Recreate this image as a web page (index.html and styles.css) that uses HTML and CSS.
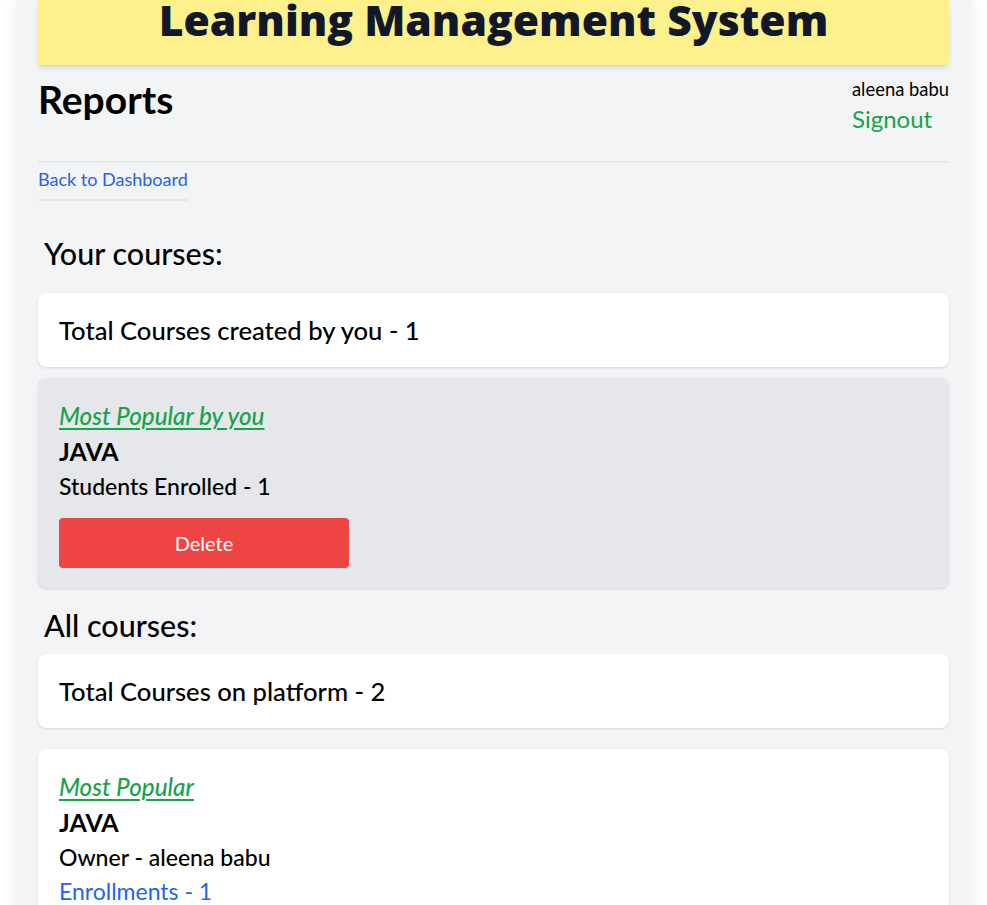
FILE: index.html
```html
<!DOCTYPE html>
<html lang="en">
<head>
<meta charset="utf-8">
<title>Reports</title>
<link rel="stylesheet" href="styles.css">
</head>
<body>
<div class="page">
  <header class="site-header">
    <h1 class="site-title">Learning Management System</h1>
  </header>
  <div class="topbar">
    <h2 class="page-title">Reports</h2>
    <div class="user">
      <div class="user-name">aleena babu</div>
      <a class="signout" href="#">Signout</a>
    </div>
  </div>
  <nav class="crumbs">
    <a class="back-link" href="#">Back to Dashboard</a>
  </nav>

  <h3 class="section-title section-first">Your courses:</h3>
  <div class="card stat-card">Total Courses created by you - 1</div>
  <div class="card popular-card muted">
    <a class="popular-label" href="#">Most Popular by you</a>
    <div class="course-name">JAVA</div>
    <div class="course-meta">Students Enrolled - 1</div>
    <button class="delete-btn">Delete</button>
  </div>

  <h3 class="section-title section-second">All courses:</h3>
  <div class="card stat-card">Total Courses on platform - 2</div>
  <div class="card popular-card all-popular">
    <a class="popular-label" href="#">Most Popular</a>
    <div class="course-name">JAVA</div>
    <div class="course-meta">Owner - aleena babu</div>
    <div class="course-enroll">Enrollments - 1</div>
  </div>
</div>
</body>
</html>
```

FILE: styles.css
```css
* { box-sizing: border-box; }
html, body { margin: 0; padding: 0; }
body {
  background: #ffffff;
  font-family: "Lato", "Noto Sans", sans-serif;
  color: #000;
  overflow: hidden;
}
.page {
  margin: 0 16px;
  min-height: 905px;
  background: #f3f4f6;
  padding: 0 22px 40px;
  box-shadow: 0 0 18px rgba(0,0,0,0.08);
}
.site-header {
  height: 65px;
  background: #fef08a;
  display: flex;
  align-items: flex-end;
  justify-content: center;
  padding-bottom: 22px;
  box-shadow: 0 4px 6px -1px rgba(0,0,0,0.1), 0 2px 4px -2px rgba(0,0,0,0.1);
}
.site-title {
  margin: 0;
  font-family: "Open Sans", "Lato", sans-serif;
  font-size: 42.6px;
  line-height: 48px;
  font-weight: 800;
  color: #111827;
  white-space: nowrap;
}
.topbar {
  display: flex;
  justify-content: space-between;
  align-items: flex-start;
  padding-top: 12px;
  height: 98px;
  border-bottom: 2px solid #e5e7eb;
}
.page-title {
  margin: 0;
  font-size: 39px;
  line-height: 44px;
  font-weight: 700;
}
.user { display: flex; flex-direction: column; align-items: flex-start; padding-top: 1px; }
.user-name { font-size: 18.4px; line-height: 22px; }
.signout {
  color: #16a34a;
  text-decoration: none;
  font-size: 24px;
  line-height: 37px;
}
.crumbs { padding-top: 4px; }
.back-link {
  display: inline-block;
  color: #2563eb;
  text-decoration: none;
  font-size: 18px;
  line-height: 24px;
  padding-bottom: 8px;
  border-bottom: 2px solid #e5e7eb;
}
.section-title {
  margin: 0;
  padding-left: 6px;
  font-size: 30.5px;
  line-height: 40px;
  font-weight: 500;
}
.section-first { margin-top: 32px; margin-bottom: 20px; }
.section-second { margin-top: 17px; margin-bottom: 9px; }
.card {
  background: #fff;
  border-radius: 8px;
  box-shadow: 0 1px 3px 0 rgba(0,0,0,0.1), 0 1px 2px -1px rgba(0,0,0,0.1);
  padding: 0 21px;
}
.stat-card {
  height: 74px;
  display: flex;
  align-items: center;
  font-size: 25.6px;
  font-weight: 500;
}
.popular-card {
  margin-top: 11px;
  padding-top: 21px;
  padding-bottom: 20px;
  display: flex;
  flex-direction: column;
  align-items: flex-start;
}
.muted { background: #e5e7eb; }
.popular-label {
  color: #16a34a;
  font-style: italic;
  font-size: 24.2px;
  line-height: 34px;
  font-weight: 500;
  text-decoration: underline;
  text-decoration-thickness: 2px;
  text-underline-offset: 3px;
}
.course-name {
  font-size: 25px;
  line-height: 37px;
  font-weight: 700;
}
.course-meta {
  font-size: 23px;
  line-height: 33px;
  font-weight: 500;
}
.course-enroll {
  font-size: 23px;
  line-height: 34px;
  color: #2563eb;
}
.delete-btn {
  margin-top: 15px;
  width: 290px;
  height: 50px;
  background: #ef4444;
  color: #fff;
  border: 0;
  border-radius: 4px;
  font-family: inherit;
  font-size: 20px;
}
.all-popular { margin-top: 21px; }
```
